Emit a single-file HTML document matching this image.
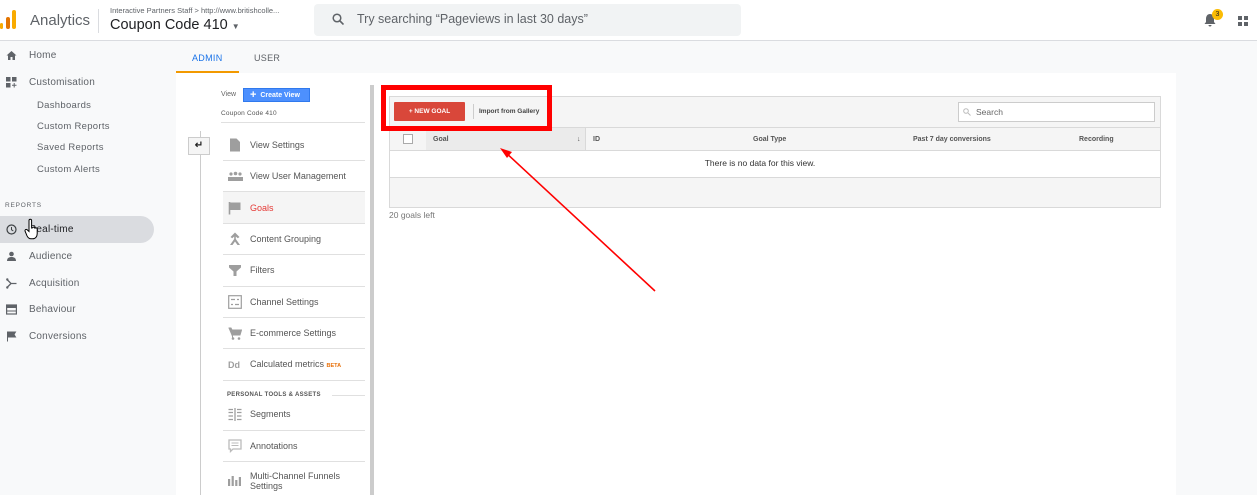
<!DOCTYPE html>
<html><head><meta charset="utf-8"><style>
*{box-sizing:border-box;margin:0;padding:0}
html,body{width:1257px;height:495px;overflow:hidden}
body{font-family:"Liberation Sans",Arial,sans-serif;background:#f8f9fa;position:relative;color:#5f6368}
.abs{position:absolute}
#hdr{left:0;top:0;width:1257px;height:41px;background:#fff;border-bottom:1px solid #dadce0}
#side{left:0;top:42px;width:176px;height:453px;background:#f8f9fa}
.nav{position:absolute;left:29px;font-size:10px;color:#5f6368;letter-spacing:.2px}
.sub{position:absolute;left:37px;font-size:9.5px;color:#5f6368;letter-spacing:.3px}
.ic{position:absolute;left:6px;width:11px;height:11px}
#tabs{left:176px;top:42px;width:1081px;height:31px;background:#f8f9fa}
#panel{left:176px;top:73px;width:1000px;height:422px;background:#fff}
.item{position:absolute;left:223px;width:142px;border-bottom:1px solid #e0e0e0;font-size:9px;color:#555}
.item span{position:absolute;left:27px}
.item svg{position:absolute;left:5px}
.th{position:absolute;top:136px;font-size:7px;font-weight:bold;color:#555}
</style></head><body>
<div id="hdr" class="abs">
  <svg class="abs" style="left:0;top:10px" width="18" height="20"><rect x="0" y="13" width="3" height="6" rx="1.5" fill="#f9ab00"/><rect x="6" y="7" width="4" height="12" rx="2" fill="#e37400"/><rect x="12" y="0" width="4" height="19" rx="2" fill="#f9ab00"/></svg>
  <div class="abs" style="left:30px;top:12px;font-size:15px;color:#5f6368">Analytics</div>
  <div class="abs" style="left:98px;top:9px;width:1px;height:24px;background:#dadce0"></div>
  <div class="abs" style="left:110px;top:6px;font-size:7.5px;color:#5f6368">Interactive Partners Staff &gt; http://www.britishcolle...</div>
  <div class="abs" style="left:110px;top:17px;font-size:14.5px;color:#202124">Coupon Code 410 <span style="font-size:8px;color:#5f6368">▼</span></div>
  <div class="abs" style="left:314px;top:4px;width:427px;height:32px;background:#f1f3f4;border-radius:4px"></div>
  <svg class="abs" style="left:332px;top:13px" width="12" height="12"><circle cx="5" cy="5" r="3.8" stroke="#5f6368" stroke-width="1.5" fill="none"/><line x1="8" y1="8" x2="11.5" y2="11.5" stroke="#5f6368" stroke-width="1.6"/></svg>
  <div class="abs" style="left:357px;top:12px;font-size:12.5px;color:#5f6368">Try searching “Pageviews in last 30 days”</div>
  <svg class="abs" style="left:1204px;top:13px" width="12" height="14"><path d="M6 1C3.5 1 2 3 2 6v3L0.5 11h11L10 9V6C10 3 8.5 1 6 1z M4.5 12h3a1.5 1.5 0 0 1-3 0z" fill="#5f6368"/></svg>
  <div class="abs" style="left:1212px;top:9px;width:11px;height:11px;border-radius:50%;background:#fbbc04;font-size:7px;text-align:center;line-height:11px;color:#202124">3</div>
  <svg class="abs" style="left:1238px;top:16px" width="10" height="10"><rect x="0" y="0" width="4" height="4" fill="#5f6368"/><rect x="6" y="0" width="4" height="4" fill="#5f6368"/><rect x="0" y="6" width="4" height="4" fill="#5f6368"/><rect x="6" y="6" width="4" height="4" fill="#5f6368"/></svg>
</div>
<div id="side" class="abs">
  <svg class="ic" style="top:8px" viewBox="0 0 11 11"><path d="M5.5 1L0.5 5.5H2V10H4.5V7H6.5V10H9V5.5H10.5Z" fill="#5f6368"/></svg>
  <div class="nav" style="top:8px">Home</div>
  <svg class="ic" style="top:35px" viewBox="0 0 11 11"><rect x="0" y="0" width="4.5" height="4.5" fill="#5f6368"/><rect x="6" y="0" width="4.5" height="4.5" fill="#5f6368"/><rect x="0" y="6" width="4.5" height="4.5" fill="#5f6368"/><path d="M8.2 6v4.5M6 8.2h4.5" stroke="#5f6368"/></svg>
  <div class="nav" style="top:35px">Customisation</div>
  <div class="sub" style="top:58px">Dashboards</div>
  <div class="sub" style="top:79px">Custom Reports</div>
  <div class="sub" style="top:100px">Saved Reports</div>
  <div class="sub" style="top:122px">Custom Alerts</div>
  <div class="abs" style="left:5px;top:160px;font-size:6.5px;letter-spacing:.8px;color:#5f6368">REPORTS</div>
  <div class="abs" style="left:0;top:174px;width:154px;height:27px;background:#dadce0;border-radius:0 14px 14px 0"></div>
  <svg class="ic" style="top:182px" viewBox="0 0 11 11"><circle cx="5.5" cy="5.5" r="4.5" stroke="#3c4043" stroke-width="1.2" fill="none"/><path d="M5.5 3v2.7l1.8 1.3" stroke="#3c4043" fill="none"/></svg>
  <div class="nav" style="top:182px;color:#202124">Real-time</div>
  <svg class="abs" style="left:24px;top:176px" width="16" height="22" viewBox="0 0 16 22"><path d="M5 2.5a1.3 1.3 0 0 1 2.6 0V10l1-.2a1.3 1.3 0 0 1 2.4.4 1.3 1.3 0 0 1 2.2.6v5c0 3-2 5-4.5 5H7c-2 0-3-1-4-3L1 13a1.3 1.3 0 0 1 2-1.4L5 13.5z" fill="#fff" stroke="#000" stroke-width="1"/></svg>
  <svg class="ic" style="top:209px" viewBox="0 0 11 11"><circle cx="5.5" cy="3" r="2.3" fill="#5f6368"/><path d="M1 10c0-3 2-4 4.5-4s4.5 1 4.5 4z" fill="#5f6368"/></svg>
  <div class="nav" style="top:209px">Audience</div>
  <svg class="ic" style="top:236px" viewBox="0 0 11 11"><path d="M1 1.5L5 5.5H10.5M1 9.5L5 5.5" stroke="#5f6368" stroke-width="1.3" fill="none"/><circle cx="1.3" cy="1.5" r="1.2" fill="#5f6368"/><circle cx="1.3" cy="9.5" r="1.2" fill="#5f6368"/></svg>
  <div class="nav" style="top:236px">Acquisition</div>
  <svg class="ic" style="top:262px" viewBox="0 0 11 11"><rect x="0.6" y="1" width="9.8" height="9" stroke="#5f6368" stroke-width="1.2" fill="none"/><rect x="0.6" y="1" width="9.8" height="3" fill="#5f6368"/><path d="M1 7h9" stroke="#5f6368"/></svg>
  <div class="nav" style="top:262px">Behaviour</div>
  <svg class="ic" style="top:289px" viewBox="0 0 11 11"><path d="M1.5 0.5V10.5M1.5 1H9.5L8 3.5 9.5 6H1.5" fill="#5f6368" stroke="#5f6368"/></svg>
  <div class="nav" style="top:289px">Conversions</div>
</div>
<div id="tabs" class="abs">
  <div class="abs" style="left:16px;top:11px;font-size:9px;color:#1a73e8;letter-spacing:.3px">ADMIN</div>
  <div class="abs" style="left:0;top:29px;width:63px;height:2px;background:#f29900"></div>
  <div class="abs" style="left:78px;top:11px;font-size:9px;color:#5f6368;letter-spacing:.3px">USER</div>
</div>
<div id="panel" class="abs"></div>
<div class="abs" style="left:221px;top:91px;font-size:7px;color:#666">View</div>
<div class="abs" style="left:243px;top:88px;width:67px;height:14px;background:#4d90fe;border:1px solid #3079ed;color:#fff;font-size:7px;font-weight:bold;line-height:12px;padding-left:6px"><span style="font-size:11px;vertical-align:-1px">+</span>&nbsp; Create View</div>
<div class="abs" style="left:221px;top:110px;font-size:6.5px;color:#555;letter-spacing:.2px">Coupon Code 410</div>
<div class="abs" style="left:221px;top:122px;width:144px;height:1px;background:#e0e0e0"></div>
<div class="abs" style="left:200px;top:131px;width:1px;height:364px;background:#ccc"></div>
<div class="abs" style="left:188px;top:137px;width:22px;height:18px;background:#f5f5f5;border:1px solid #ccc;font-size:10px;text-align:center;line-height:15px;color:#222;font-weight:bold">↵</div>
<div class="item" style="top:130px;height:31px"><svg style="top:8px" width="14" height="14" viewBox="0 0 14 14"><path d="M2 0.5H8.5L12 4V13.5H2Z" fill="#9e9e9e"/></svg><span style="top:10px">View Settings</span></div>
<div class="item" style="top:161px;height:31px"><svg style="top:9px" width="15" height="12" viewBox="0 0 15 12"><circle cx="3" cy="4" r="1.6" fill="#9e9e9e"/><circle cx="7.5" cy="3.5" r="1.8" fill="#9e9e9e"/><circle cx="12" cy="4" r="1.6" fill="#9e9e9e"/><rect x="0" y="7" width="15" height="4" fill="#9e9e9e"/></svg><span style="top:10px">View User Management</span></div>
<div class="item" style="top:192px;height:32px;background:#f5f5f5"><svg style="top:9px" width="14" height="14" viewBox="0 0 14 14"><path d="M1.5 1V13.5" stroke="#9e9e9e" stroke-width="1.6"/><path d="M2 1.5H12.5V9H2Z" fill="#9e9e9e"/></svg><span style="top:11px;color:#e53935">Goals</span></div>
<div class="item" style="top:224px;height:31px"><svg style="top:8px" width="14" height="14" viewBox="0 0 14 14"><path d="M7 0.5L11.5 5 9.8 6.2 7.8 4.5V7L12 13H9.5L7 9.5 4.5 13H2L6.2 7V4.5L4.2 6.2 2.5 5Z" fill="#9e9e9e"/></svg><span style="top:10px">Content Grouping</span></div>
<div class="item" style="top:255px;height:32px"><svg style="top:9px" width="14" height="13" viewBox="0 0 14 13"><path d="M1 1H13V3.5L8.5 7.5V12H5.5V7.5L1 3.5Z" fill="#9e9e9e"/></svg><span style="top:10px">Filters</span></div>
<div class="item" style="top:287px;height:31px"><svg style="top:8px" width="14" height="14" viewBox="0 0 14 14"><rect x="0.7" y="0.7" width="12.6" height="12.6" fill="none" stroke="#9e9e9e" stroke-width="1.2"/><path d="M3 4.5H7M9 4.5H11M3 9.5H5M7 9.5H11" stroke="#9e9e9e" stroke-width="1.2"/></svg><span style="top:10px">Channel Settings</span></div>
<div class="item" style="top:318px;height:31px"><svg style="top:9px" width="14" height="13" viewBox="0 0 14 13"><path d="M0.5 1H3L4 3H13.5L12 8H4.5V10.5" fill="#9e9e9e" stroke="#9e9e9e"/><circle cx="5" cy="11.5" r="1.3" fill="#9e9e9e"/><circle cx="11" cy="11.5" r="1.3" fill="#9e9e9e"/></svg><span style="top:10px">E-commerce Settings</span></div>
<div class="item" style="top:349px;height:32px"><b style="position:absolute;left:5px;top:11px;font-size:9px;color:#9e9e9e">Dd</b><span style="top:10px">Calculated metrics <b style="color:#e8710a;font-size:5.5px">BETA</b></span></div>
<div class="abs" style="left:227px;top:392px;font-size:6px;font-weight:bold;color:#555;letter-spacing:.3px">PERSONAL TOOLS &amp; ASSETS</div>
<div class="abs" style="left:332px;top:395px;width:33px;height:1px;background:#e0e0e0"></div>
<div class="item" style="top:400px;height:31px;border-top:none"><svg style="top:8px" width="14" height="13" viewBox="0 0 14 13"><path d="M0.5 1.5H5M0.5 4.5H5M0.5 8H5M0.5 11.5H5M7 0V13M9 1.5H13.5M9 4.5H13.5M9 8H13.5M9 11.5H13.5" stroke="#9e9e9e" stroke-width="1.3"/></svg><span style="top:9px">Segments</span></div>
<div class="item" style="top:431px;height:31px"><svg style="top:8px" width="14" height="14" viewBox="0 0 14 14"><path d="M1 1H13V10H5L2.5 12.5V10H1Z" fill="none" stroke="#bbb" stroke-width="1.3"/><path d="M3.5 4H10.5M3.5 6.5H10.5" stroke="#bbb"/></svg><span style="top:10px">Annotations</span></div>
<div class="item" style="top:462px;height:40px;border:none"><svg style="top:12px" width="14" height="12" viewBox="0 0 14 12"><rect x="0" y="5" width="2.2" height="7" fill="#9e9e9e"/><rect x="3.6" y="2" width="2.2" height="10" fill="#9e9e9e"/><rect x="7.2" y="6" width="2.2" height="6" fill="#9e9e9e"/><rect x="10.8" y="3" width="2.2" height="9" fill="#9e9e9e"/></svg><span style="top:9px;line-height:10px">Multi-Channel Funnels<br>Settings</span></div>
<div class="abs" style="left:370px;top:85px;width:4px;height:410px;background:#ccc"></div>
<!-- goals table -->
<div class="abs" style="left:389px;top:96px;width:772px;height:112px;border:1px solid #d9d9d9;background:#f5f5f5"></div>
<div class="abs" style="left:958px;top:102px;width:197px;height:20px;background:#fff;border:1px solid #ccc;font-size:8.5px;color:#666;line-height:18px;padding-left:17px">Search</div>
<svg class="abs" style="left:963px;top:108px" width="8" height="8"><circle cx="3" cy="3" r="2.3" stroke="#bbb" fill="none"/><line x1="5" y1="5" x2="7.5" y2="7.5" stroke="#bbb"/></svg>
<div class="abs" style="left:389px;top:127px;width:772px;height:1px;background:#d9d9d9"></div>
<div class="abs" style="left:426px;top:128px;width:160px;height:22px;background:#ebebeb;border-right:1px solid #d9d9d9"></div>
<div class="abs" style="left:403px;top:134px;width:10px;height:10px;border:1px solid #aaa;background:#fff"></div>
<div class="th" style="left:433px">Goal</div>
<div class="th" style="left:577px;font-weight:normal">↓</div>
<div class="th" style="left:593px">ID</div>
<div class="th" style="left:753px">Goal Type</div>
<div class="th" style="left:913px">Past 7 day conversions</div>
<div class="th" style="left:1079px">Recording</div>
<div class="abs" style="left:390px;top:150px;width:770px;height:28px;background:#fff;border-top:1px solid #d9d9d9;border-bottom:1px solid #d9d9d9;font-size:8.5px;color:#333;text-align:center;line-height:25px;padding-right:30px">There is no data for this view.</div>
<div class="abs" style="left:389px;top:210px;font-size:8.5px;color:#777">20 goals left</div>
<!-- red box -->
<div class="abs" style="left:381px;top:85px;width:171px;height:46px;border:5px solid #f00"></div>
<div class="abs" style="left:394px;top:102px;width:71px;height:19px;background:#d9473a;border-radius:1px;color:#fff;font-size:6.5px;font-weight:bold;text-align:center;line-height:19px">+ NEW GOAL</div>
<div class="abs" style="left:473px;top:104px;width:1px;height:15px;background:#ccc"></div>
<div class="abs" style="left:479px;top:108px;font-size:6.5px;font-weight:bold;color:#444">Import from Gallery</div>
<!-- arrow -->
<svg class="abs" style="left:495px;top:145px" width="170" height="150"><line x1="160" y1="146" x2="9" y2="6" stroke="#f00" stroke-width="1.6"/><path d="M5 3L17 7 12 13Z" fill="#f00"/></svg>
</body></html>
